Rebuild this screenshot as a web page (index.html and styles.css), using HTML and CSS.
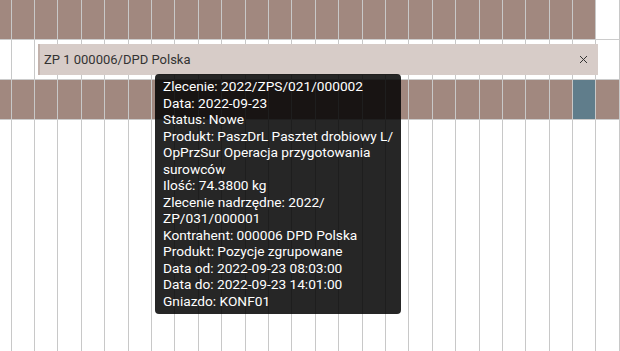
FILE: index.html
```html
<!DOCTYPE html>
<html lang="pl">
<head>
    <meta charset="UTF-8">
    <title>Harmonogram</title>
    <link rel="stylesheet" href="styles.css">
</head>
<body>
    <div class="board">
        <div class="row row-busy" id="row1"></div>
        <div class="row row-open" id="row2">
            <div class="event-bar">
                <span class="event-title">ZP 1 000006/DPD Polska</span>
                <span class="event-close">
                    <svg width="9" height="9" viewBox="0 0 9 9"><path d="M1 1L8 8M8 1L1 8" stroke="#333" stroke-width="1" fill="none"/></svg>
                </span>
            </div>
        </div>
        <div class="row row-busy" id="row3"></div>
        <div class="row row-rest" id="row4"></div>

        <div class="tooltip">
            Zlecenie: 2022/ZPS/021/000002<br>
            Data: 2022-09-23<br>
            Status: Nowe<br>
            <span class="nowrap">Produkt: PaszDrL Pasztet drobiowy L/</span><br>OpPrzSur Operacja przygotowania surowców<br>
            Ilość: 74.3800 kg<br>
            Zlecenie nadrzędne: 2022/<br>ZP/031/000001<br>
            Kontrahent: 000006 DPD Polska<br>
            Produkt: Pozycje zgrupowane<br>
            Data od: 2022-09-23 08:03:00<br>
            Data do: 2022-09-23 14:01:00<br>
            Gniazdo: KONF01
        </div>
    </div>

    <script>
        // kolumny: 0 = ucięta, 1..27 = sloty
        const COLS = 28;

        function fillRow(id, kindOf) {
            const row = document.getElementById(id);
            const cells = [];
            for (let i = 0; i < COLS; i++) {
                const kind = kindOf ? kindOf(i) : '';
                cells.push(`<div class="cell ${i === 0 ? 'cell-first' : ''}"><div class="slot ${kind}"></div></div>`);
            }
            row.insertAdjacentHTML('afterbegin', cells.join(''));
        }

        fillRow('row1', i => i === 26 ? '' : 'slot-brown');
        fillRow('row2');
        fillRow('row3', i => i === 25 ? 'slot-blue' : 'slot-brown');
        fillRow('row4');
    </script>
</body>
</html>
```

FILE: styles.css
```css
* {
    margin: 0;
    padding: 0;
    box-sizing: border-box;
}

body {
    font-family: Roboto, "Noto Sans", sans-serif;
    background: #fff;
    width: 620px;
    height: 351px;
    overflow: hidden;
}

.board {
    position: relative;
    width: 620px;
    height: 351px;
    display: flex;
    flex-direction: column;
    overflow: hidden;
}

.row {
    position: relative;
    display: flex;
    height: 40px;
    border-bottom: 1px solid #ccc;
}

.row-rest {
    flex: 1;
    border-bottom: none;
}

.cell {
    flex: 0 0 23.4px;
    border-left: 1px solid #c8c8c8;
    display: flex;
}

.cell-first {
    flex-basis: 10.7px;
    border-left: none;
}

.slot {
    flex: 1;
}

.slot-brown {
    background: #a1887f;
}

.slot-blue {
    background: #607d8b;
}

.event-bar {
    position: absolute;
    left: 38px;
    top: 4px;
    width: 560px;
    height: 31px;
    background: #d7ccc8;
    border-left: 2px solid #c3b3ad;
    display: flex;
    align-items: center;
    justify-content: space-between;
    padding: 0 10px 0 4px;
}

.event-title {
    font-size: 13px;
    color: #333;
}

.event-close {
    display: flex;
}

.tooltip {
    position: absolute;
    left: 155px;
    top: 74px;
    width: 246px;
    padding: 4px 8px 5px;
    background: rgba(0, 0, 0, 0.85);
    border-radius: 4px;
    color: #fff;
    font-size: 13.7px;
    line-height: 16.5px;
}

.nowrap {
    white-space: nowrap;
}
```
